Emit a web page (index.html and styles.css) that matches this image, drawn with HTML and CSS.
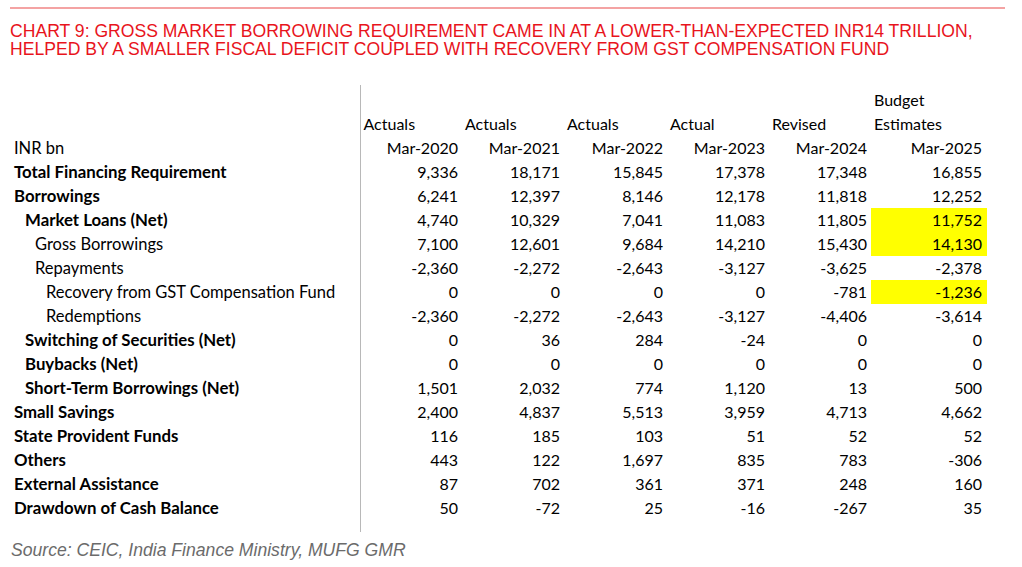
FILE: index.html
```html
<!DOCTYPE html>
<html>
<head>
<meta charset="utf-8">
<link rel="stylesheet" href="styles.css">
</head>
<body>
<div class="page">
  <div class="rule"></div>
  <h1 class="title">CHART 9: GROSS MARKET BORROWING REQUIREMENT CAME IN AT A LOWER-THAN-EXPECTED INR14 TRILLION, HELPED BY A SMALLER FISCAL DEFICIT COUPLED WITH RECOVERY FROM GST COMPENSATION FUND</h1>
  <table class="data">
    <colgroup>
      <col class="c-label"><col class="c-num"><col class="c-num"><col class="c-num3"><col class="c-num"><col class="c-num"><col class="c-last">
    </colgroup>
    <tbody>
      <tr class="spacer-top"><td class="label"></td><td></td><td></td><td></td><td></td><td></td><td></td></tr>
      <tr class="hd"><td class="label"></td><td></td><td></td><td></td><td></td><td></td><td class="hl">Budget</td></tr>
      <tr class="hd"><td class="label"></td><td class="hl">Actuals</td><td class="hl">Actuals</td><td class="hl">Actuals</td><td class="hl">Actual</td><td class="hl">Revised</td><td class="hl">Estimates</td></tr>
      <tr><td class="label">INR bn</td><td>Mar-2020</td><td>Mar-2021</td><td>Mar-2022</td><td>Mar-2023</td><td>Mar-2024</td><td>Mar-2025</td></tr>
      <tr><td class="label b">Total Financing Requirement</td><td>9,336</td><td>18,171</td><td>15,845</td><td>17,378</td><td>17,348</td><td>16,855</td></tr>
      <tr><td class="label b">Borrowings</td><td>6,241</td><td>12,397</td><td>8,146</td><td>12,178</td><td>11,818</td><td>12,252</td></tr>
      <tr><td class="label b i1">Market Loans (Net)</td><td>4,740</td><td>10,329</td><td>7,041</td><td>11,083</td><td>11,805</td><td class="yel">11,752</td></tr>
      <tr><td class="label i2">Gross Borrowings</td><td>7,100</td><td>12,601</td><td>9,684</td><td>14,210</td><td>15,430</td><td class="yel">14,130</td></tr>
      <tr><td class="label i2">Repayments</td><td>-2,360</td><td>-2,272</td><td>-2,643</td><td>-3,127</td><td>-3,625</td><td>-2,378</td></tr>
      <tr><td class="label i3">Recovery from GST Compensation Fund</td><td>0</td><td>0</td><td>0</td><td>0</td><td>-781</td><td class="yel">-1,236</td></tr>
      <tr><td class="label i3">Redemptions</td><td>-2,360</td><td>-2,272</td><td>-2,643</td><td>-3,127</td><td>-4,406</td><td>-3,614</td></tr>
      <tr><td class="label b i1">Switching of Securities (Net)</td><td>0</td><td>36</td><td>284</td><td>-24</td><td>0</td><td>0</td></tr>
      <tr><td class="label b i1">Buybacks (Net)</td><td>0</td><td>0</td><td>0</td><td>0</td><td>0</td><td>0</td></tr>
      <tr><td class="label b i1">Short-Term Borrowings (Net)</td><td>1,501</td><td>2,032</td><td>774</td><td>1,120</td><td>13</td><td>500</td></tr>
      <tr><td class="label b">Small Savings</td><td>2,400</td><td>4,837</td><td>5,513</td><td>3,959</td><td>4,713</td><td>4,662</td></tr>
      <tr><td class="label b">State Provident Funds</td><td>116</td><td>185</td><td>103</td><td>51</td><td>52</td><td>52</td></tr>
      <tr><td class="label b">Others</td><td>443</td><td>122</td><td>1,697</td><td>835</td><td>783</td><td>-306</td></tr>
      <tr><td class="label b">External Assistance</td><td>87</td><td>702</td><td>361</td><td>371</td><td>248</td><td>160</td></tr>
      <tr><td class="label b">Drawdown of Cash Balance</td><td>50</td><td>-72</td><td>25</td><td>-16</td><td>-267</td><td>35</td></tr>
      <tr class="spacer-bottom"><td class="label"></td><td></td><td></td><td></td><td></td><td></td><td></td></tr>
    </tbody>
  </table>
  <p class="source">Source: CEIC, India Finance Ministry, MUFG GMR</p>
</div>
</body>
</html>
```
FILE: styles.css
```css
html, body {
  margin: 0;
  padding: 0;
  background: #ffffff;
}
.page {
  width: 1022px;
  height: 567px;
  padding-top: 7px;
  box-sizing: border-box;
  overflow: hidden;
}
.rule {
  margin: 0 17px 0 10px;
  height: 2px;
  background: #f4a3a3;
}
.title {
  margin: 13px 0 0 10px;
  width: 1000px;
  font-family: "Liberation Sans", Arial, sans-serif;
  font-weight: normal;
  font-size: 17.6px;
  line-height: 18px;
  color: #e8141c;
}
.data {
  margin-top: 27px;
  border-collapse: collapse;
  table-layout: fixed;
  width: 987px;
  font-family: Lato, "Open Sans", sans-serif;
  font-size: 16px;
  color: #000;
}
.c-label { width: 360px; }
.c-num { width: 102px; }
.c-num3 { width: 103px; }
.c-last { width: 116px; }
.data td {
  height: 24px;
  padding: 0 4px 0 3px;
  text-align: right;
  white-space: nowrap;
  vertical-align: middle;
  line-height: 24px;
}
.data td:last-child {
  padding-right: 5px;
}
.data td.label {
  text-align: left;
  padding-left: 14px;
  font-size: 16.5px;
  border-right: 1px solid #b8b8b8;
}
.data td.hl {
  text-align: left;
}
.data td.b {
  font-weight: bold;
  font-size: 16.8px;
}
.data td.i1 { padding-left: 25px; }
.data td.i2 { padding-left: 35px; }
.data td.i3 { padding-left: 46px; }
.data td.yel {
  background: #ffff00;
}
.data tr.spacer-top td {
  height: 3px;
  line-height: 3px;
}
.data tr.spacer-bottom td {
  height: 12px;
  line-height: 12px;
}
.source {
  margin: 8px 0 0 11px;
  font-family: "Liberation Sans", Arial, sans-serif;
  font-style: italic;
  font-size: 17.6px;
  color: #6b6b6b;
}
```
